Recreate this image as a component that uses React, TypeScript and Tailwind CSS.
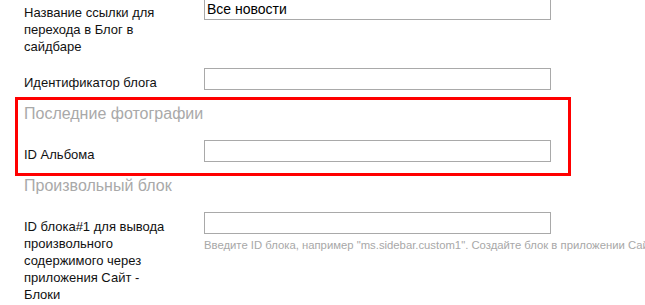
import React from 'react';

const Row: React.FC<{ label: string; value?: string; hint?: string; className?: string }> = ({ label, value, hint, className }) => (
  <div className={`flex items-start ${className ?? ''}`}>
    <label className="w-[150px] shrink-0 mr-[30px] pt-[6px] text-[13px] leading-[17px] text-[#111]">{label}</label>
    <div className="flex flex-col shrink-0">
      <input
        className="w-[347px] h-[22px] border border-[#a9a9a9] px-[2px] text-[14px] text-black outline-none"
        defaultValue={value}
      />
      {hint && (
        <p className="mt-[4px] whitespace-nowrap text-[11.3px] leading-[14px] text-[#a8a8a8]">{hint}</p>
      )}
    </div>
  </div>
);

export default function App() {
  return (
    <div className="relative w-[645px] h-[305px] overflow-hidden bg-white font-['Liberation_Sans',Arial,sans-serif]">
      <div className="pl-[24px] mt-[-2px]">
        <Row label="Название ссылки для перехода в Блог в сайдбаре" value="Все новости" className="mb-[13px]" />
        <Row label="Идентификатор блога" className="mb-[13px]" />

        {/* Last photos */}
        <h3 className="text-[16px] leading-[20px] text-[#a9a9a9] mb-[16px]">Последние фотографии</h3>
        <Row label="ID Альбома" className="mb-[13px]" />

        {/* Custom block */}
        <h3 className="text-[16px] leading-[20px] text-[#a9a9a9] mb-[16px]">Произвольный блок</h3>
        <Row
          label="ID блока#1 для вывода произвольного содержимого через приложения Сайт - Блоки"
          hint={'Введите ID блока, например "ms.sidebar.custom1". Создайте блок в приложении Сайт - Блоки'}
        />
      </div>

      {/* highlight */}
      <div className="absolute left-[15px] top-[97px] w-[556px] h-[79px] border-[3px] border-[#ff0000] pointer-events-none" />
    </div>
  );
}
